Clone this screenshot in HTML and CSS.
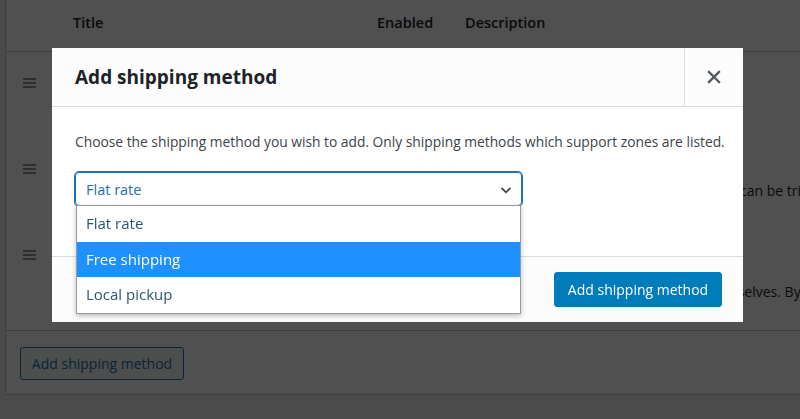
FILE: index.html
```html
<!DOCTYPE html>
<html lang="en">
<head>
<meta charset="utf-8">
<title>Add shipping method</title>
<link rel="stylesheet" href="styles.css">
</head>
<body>
<div class="page">
  <div class="card">
    <div class="row thead">
      <div class="c-handle"></div>
      <div class="c-title">Title</div>
      <div class="c-enabled">Enabled</div>
      <div class="c-desc">Description</div>
    </div>
    <div class="row r1">
      <div class="c-handle"><span class="handle"><i></i><i></i><i></i></span></div>
      <div class="c-title"><a class="method-link">Flat rate</a></div>
      <div class="c-enabled"><span class="toggle"></span></div>
      <div class="c-desc body-desc"><p class="desc">Lets you charge a fixed rate for shipping.</p></div>
    </div>
    <div class="row r2">
      <div class="c-handle"><span class="handle"><i></i><i></i><i></i></span></div>
      <div class="c-title"><a class="method-link">Free shipping</a></div>
      <div class="c-enabled"><span class="toggle"></span></div>
      <div class="c-desc body-desc"><p class="desc">&nbsp;</p><p class="desc">Free shipping is a special method which can be triggered with coupons and minimum spends.</p></div>
    </div>
    <div class="row r3">
      <div class="c-handle"><span class="handle"><i></i><i></i><i></i></span></div>
      <div class="c-title"><a class="method-link">Local pickup</a></div>
      <div class="c-enabled"><span class="toggle"></span></div>
      <div class="c-desc body-desc desc-low"><p class="desc">&nbsp;</p><p class="desc">Allow customers to pick up orders themselves. By default, when using local pickup store base taxes will apply regardless of customer address.</p></div>
    </div>
    <div class="tfoot">
      <button class="btn-secondary" type="button">Add shipping method</button>
    </div>
  </div>
</div>

<div class="overlay"></div>

<div class="modal">
  <header class="modal-header">
    <h1 class="modal-title">Add shipping method</h1>
    <button class="modal-close" type="button" aria-label="Close">
      <svg width="14" height="14" viewBox="0 0 14 14"><path d="M2 2 L12 12 M12 2 L2 12" stroke="#50575e" stroke-width="2.3" stroke-linecap="square" fill="none"/></svg>
    </button>
  </header>
  <div class="modal-body">
    <p class="intro">Choose the shipping method you wish to add. Only shipping methods which support zones are listed.</p>
    <div class="select">
      <span class="select-value">Flat rate</span>
      <svg class="chev" width="14" height="14" viewBox="0 0 14 14"><path d="M2.5 4.8 L7 9.3 L11.5 4.8" stroke="#3c434a" stroke-width="1.7" fill="none"/></svg>
    </div>
  </div>
  <footer class="modal-footer">
    <button class="btn-primary" type="button">Add shipping method</button>
  </footer>
  <ul class="dropdown">
    <li class="opt">Flat rate</li>
    <li class="opt active">Free shipping</li>
    <li class="opt">Local pickup</li>
  </ul>
</div>
</body>
</html>
```

FILE: styles.css
```css
* { box-sizing: border-box; }
html, body { margin: 0; padding: 0; }
body {
  background: #f0f0f1;
  font-family: "Open Sans", "Noto Sans", sans-serif;
  font-size: 13.8px;
  color: #1d2327;
  width: 800px;
  height: 419px;
  overflow: hidden;
}
.page { padding-left: 5px; }
.card {
  width: 1000px;
  background: #fff;
  border-left: 1px solid #c3c4c7;
  border-bottom: 1px solid #c3c4c7;
}
.row { display: flex; }
.c-handle { width: 46px; flex: none; display: flex; justify-content: center; }
.c-title { width: 304px; flex: none; padding-left: 21px; }
.c-enabled { width: 88px; flex: none; padding-left: 21px; }
.c-desc { flex: 1; padding-left: 21px; }
.body-desc { padding-left: 34px; }

.thead {
  height: 52px;
  padding-top: 12px;
  line-height: 22px;
  font-size: 14.5px;
  font-weight: 600;
  border-bottom: 1px solid #c3c4c7;
  color: #1d2327;
}
.r1, .r2, .r3 { padding-top: 20px; line-height: 22px; }
.r1, .r2 { height: 86px; }
.r3 { height: 106px; }
.handle { display: flex; flex-direction: column; gap: 2px; width: 13px; padding-top: 6px; }
.handle i { display: block; height: 2px; background: #8c8f94; }
.method-link { color: #2271b1; font-weight: 600; }
.toggle { display: inline-block; width: 32px; height: 16px; border-radius: 8px; background: #2271b1; }
.desc { margin: 0; white-space: nowrap; font-size: 14px; color: #1d2327; }
.desc-low { padding-top: 15px; }
.tfoot {
  height: 64px;
  border-top: 1px solid #c3c4c7;
  padding: 16px 14px;
}
.btn-secondary {
  font-family: inherit;
  font-size: 14px;
  height: 33px;
  width: 164px;
  padding: 0;
  color: #2271b1;
  background: #f6f7f7;
  border: 1px solid #2271b1;
  border-radius: 3px;
}

.overlay {
  position: fixed;
  inset: 0;
  background: rgba(0, 0, 0, 0.685);
}

.modal {
  position: fixed;
  left: 52px;
  top: 48px;
  width: 691px;
  height: 273px;
  background: #fff;
  display: flex;
  flex-direction: column;
}
.modal-header {
  height: 59px;
  flex: none;
  display: flex;
  background: #fcfcfc;
  border-bottom: 1px solid #dcdcde;
}
.modal-title {
  flex: 1;
  margin: 0;
  padding-left: 23px;
  line-height: 58px;
  font-size: 19px;
  font-weight: 700;
  color: #1d2327;
}
.modal-close {
  width: 59px;
  border: 0;
  border-left: 1px solid #dcdcde;
  background: transparent;
  display: flex;
  align-items: center;
  justify-content: center;
  padding: 0;
}
.modal-body {
  height: 149px;
  flex: none;
  padding: 24px 23px 0;
}
.intro {
  margin: 0;
  line-height: 22px;
  font-size: 13.8px;
  white-space: nowrap;
  color: #3c434a;
}
.select {
  margin-top: 19px;
  width: 447px;
  height: 34px;
  border: 1px solid #2271b1;
  box-shadow: 0 0 0 1px #2271b1;
  border-radius: 4px;
  display: flex;
  align-items: center;
  justify-content: space-between;
  padding: 0 8px 0 10px;
  font-size: 14.5px;
  color: #2271b1;
}
.chev { margin-top: 1px; }
.modal-footer {
  flex: 1;
  background: #fcfcfc;
  border-top: 1px solid #dcdcde;
  padding: 15px 21px;
  display: flex;
  justify-content: flex-end;
  align-items: flex-start;
}
.btn-primary {
  font-family: inherit;
  font-size: 14px;
  width: 168px;
  height: 35px;
  padding: 0;
  color: #fff;
  background: #007cba;
  border: 1px solid #007cba;
  border-radius: 3px;
}

.dropdown {
  position: absolute;
  left: 24px;
  top: 157px;
  width: 445px;
  margin: 0;
  padding: 0;
  list-style: none;
  background: #fff;
  border: 1px solid #9a9a9a;
  box-shadow: 0 2px 5px rgba(0, 0, 0, 0.25);
}
.opt {
  height: 35.5px;
  line-height: 35px;
  padding-left: 9px;
  font-size: 15px;
  color: #2c5670;
}
.opt.active { background: #1e90ff; color: #fff; }
```
